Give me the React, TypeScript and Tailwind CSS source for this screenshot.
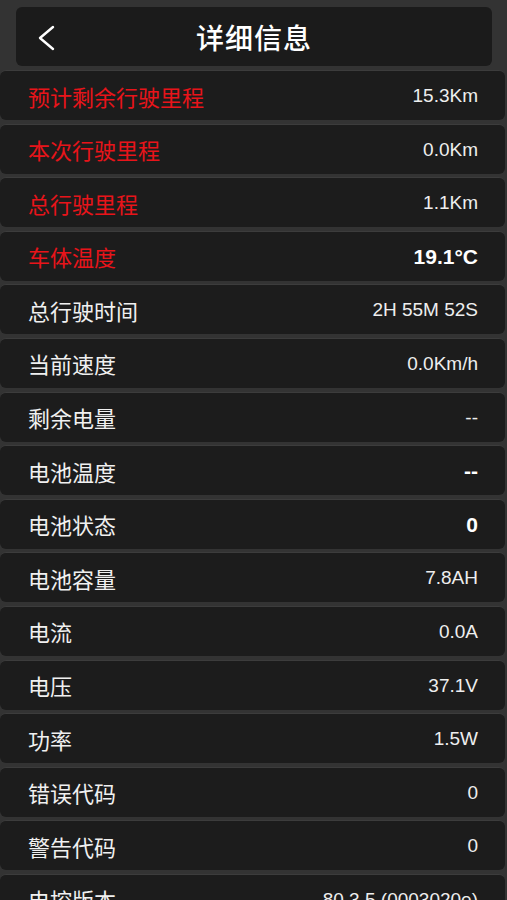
import React from "react";

type Row = { label: string; value: string; red?: boolean; bold?: boolean };

const rows: Row[] = [
  { label: "预计剩余行驶里程", value: "15.3Km", red: true },
  { label: "本次行驶里程", value: "0.0Km", red: true },
  { label: "总行驶里程", value: "1.1Km", red: true },
  { label: "车体温度", value: "19.1°C", red: true, bold: true },
  { label: "总行驶时间", value: "2H 55M 52S" },
  { label: "当前速度", value: "0.0Km/h" },
  { label: "剩余电量", value: "--" },
  { label: "电池温度", value: "--", bold: true },
  { label: "电池状态", value: "0", bold: true },
  { label: "电池容量", value: "7.8AH" },
  { label: "电流", value: "0.0A" },
  { label: "电压", value: "37.1V" },
  { label: "功率", value: "1.5W" },
  { label: "错误代码", value: "0" },
  { label: "警告代码", value: "0" },
  { label: "电控版本", value: "80.3.5 (0003020e)" },
];

export default function App() {
  return (
    <div
      className="w-[507px] h-[900px] overflow-hidden bg-[#333333]"
      style={{ fontFamily: '"Noto Sans CJK SC", "Liberation Sans", sans-serif' }}
    >
      <div className="pt-[7px] px-[16px] pr-[15px]">
        <div className="relative h-[59px] rounded-[6px] bg-[#1b1b1b] flex items-center justify-center">
          <svg
            className="absolute left-[20px] top-[18px]"
            width="20"
            height="26"
            viewBox="0 0 20 26"
            fill="none"
          >
            <path d="M17 2 L4 13 L17 24" stroke="#ffffff" strokeWidth="2.4" strokeLinecap="round" strokeLinejoin="round" />
          </svg>
          <span className="text-white text-[28px] font-medium tracking-[1px] leading-none">详细信息</span>
        </div>
      </div>
      <div className="mt-[4px] flex flex-col gap-[3.6px]">
        {rows.map((r) => (
          <div
            key={r.label}
            className="h-[50px] w-[505px] shrink-0 rounded-[6px] bg-[#1c1c1c] border-t border-[#3c3c3c] flex items-center justify-between pl-[28px] pr-[27px]"
          >
            <span
              className={
                "text-[22px] leading-none " + (r.red ? "text-[#e8141a]" : "text-[#f0f0f0]")
              }
            >
              {r.label}
            </span>
            <span
              className={
                r.bold
                  ? "text-[21px] font-bold text-white leading-none"
                  : "text-[19px] text-[#eeeeee] leading-none"
              }
              style={{ fontFamily: '"Liberation Sans", "Noto Sans", sans-serif' }}
            >
              {r.value}
            </span>
          </div>
        ))}
      </div>
    </div>
  );
}
